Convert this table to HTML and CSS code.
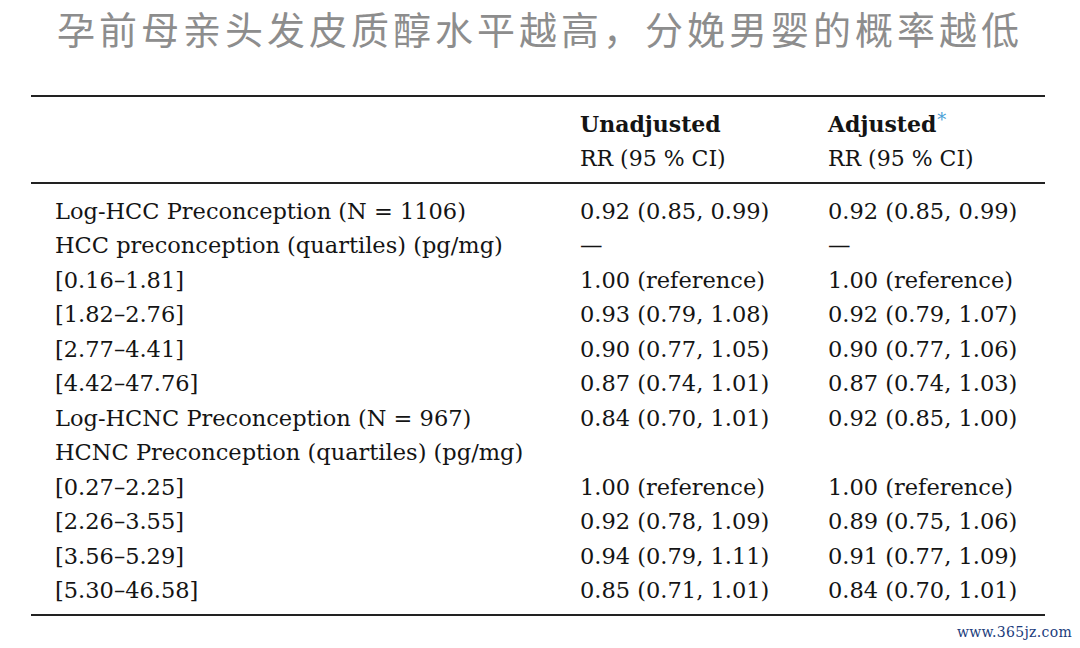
FILE: index.html
```html
<!DOCTYPE html>
<html lang="zh">
<head>
<meta charset="utf-8">
<link rel="stylesheet" href="styles.css">
</head>
<body>
<div class="page">
  <h1 class="title">孕前母亲头发皮质醇水平越高，分娩男婴的概率越低</h1>
  <table class="rr">
    <thead>
      <tr>
        <th class="c1"></th>
        <th class="c2"><span class="b">Unadjusted</span><br>RR (95 % CI)</th>
        <th class="c3"><span class="b">Adjusted</span><span class="star">*</span><br>RR (95 % CI)</th>
      </tr>
    </thead>
    <tbody>
      <tr class="first"><td class="c1">Log-HCC Preconception (N = 1106)</td><td>0.92 (0.85, 0.99)</td><td>0.92 (0.85, 0.99)</td></tr>
      <tr><td class="c1">HCC preconception (quartiles) (pg/mg)</td><td>—</td><td>—</td></tr>
      <tr><td class="c1">[0.16–1.81]</td><td>1.00 (reference)</td><td>1.00 (reference)</td></tr>
      <tr><td class="c1">[1.82–2.76]</td><td>0.93 (0.79, 1.08)</td><td>0.92 (0.79, 1.07)</td></tr>
      <tr><td class="c1">[2.77–4.41]</td><td>0.90 (0.77, 1.05)</td><td>0.90 (0.77, 1.06)</td></tr>
      <tr><td class="c1">[4.42–47.76]</td><td>0.87 (0.74, 1.01)</td><td>0.87 (0.74, 1.03)</td></tr>
      <tr><td class="c1">Log-HCNC Preconception (N = 967)</td><td>0.84 (0.70, 1.01)</td><td>0.92 (0.85, 1.00)</td></tr>
      <tr><td class="c1">HCNC Preconception (quartiles) (pg/mg)</td><td></td><td></td></tr>
      <tr><td class="c1">[0.27–2.25]</td><td>1.00 (reference)</td><td>1.00 (reference)</td></tr>
      <tr><td class="c1">[2.26–3.55]</td><td>0.92 (0.78, 1.09)</td><td>0.89 (0.75, 1.06)</td></tr>
      <tr><td class="c1">[3.56–5.29]</td><td>0.94 (0.79, 1.11)</td><td>0.91 (0.77, 1.09)</td></tr>
      <tr class="last"><td class="c1">[5.30–46.58]</td><td>0.85 (0.71, 1.01)</td><td>0.84 (0.70, 1.01)</td></tr>
    </tbody>
  </table>
  <div class="wm">www.365jz.com</div>
</div>
</body>
</html>
```

FILE: styles.css
```css
html, body {
  margin: 0;
  padding: 0;
  background: #ffffff;
}
.page {
  width: 1080px;
  height: 648px;
  overflow: hidden;
  position: relative;
}
.title {
  margin: 0;
  padding-top: 6px;
  height: 95px;
  box-sizing: border-box;
  font-family: "Noto Sans CJK SC", sans-serif;
  font-weight: 400;
  font-size: 38px;
  line-height: 44px;
  letter-spacing: 4px;
  color: #8d8d8d;
  text-align: center;
}
.rr {
  margin-left: 31px;
  width: 1014px;
  border-collapse: collapse;
  table-layout: fixed;
  font-family: "DejaVu Serif", serif;
  font-size: 22.5px;
  color: #141414;
}
.rr thead tr {
  border-top: 2px solid #222;
  border-bottom: 2px solid #222;
}
.rr tbody tr.last {
  border-bottom: 2px solid #222;
}
.rr th {
  font-weight: 400;
  text-align: left;
  vertical-align: top;
  line-height: 34px;
  padding: 10px 0 6px 0;
  font-size: 22px;
}
.rr .b { font-weight: 700; }
.rr .star {
  color: #4a9fd6;
  font-size: 18px;
  line-height: 0;
  vertical-align: 6px;
  margin-left: 1px;
}
.rr td {
  padding: 0;
  line-height: 34.45px;
  white-space: nowrap;
}
.rr tr.first td { padding-top: 10px; }
.rr tr.last td { padding-bottom: 7px; }
.rr .c1 { width: 525px; padding-left: 24px; }
.rr th.c2, .rr th.c3 { padding-left: 0; }
.rr .c2 { width: 248px; }
.wm {
  position: absolute;
  right: 8px;
  bottom: 8px;
  font-family: "DejaVu Serif", serif;
  font-size: 14px;
  color: #1b3c7c;
  letter-spacing: 0.3px;
}
```
